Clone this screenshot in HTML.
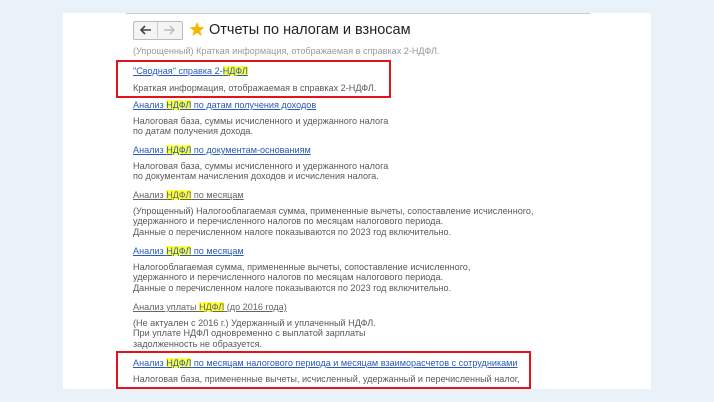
<html><head><style>
body{margin:0;width:714px;height:402px;background:#e9f1f9;position:relative;overflow:hidden;font-family:"Liberation Sans",sans-serif}
.p{position:absolute;left:63px;top:13px;width:588px;height:376px;background:#fff}
.t{position:absolute;font-size:9.1px;color:#5a5a5a;white-space:nowrap;line-height:10.3px;margin-top:1px}
.l{color:#2a5ab8;text-decoration:underline}
.g{color:#666;text-decoration:underline}
.h{background:#ffff40}
.box{position:absolute;border:2px solid #e3131d}
</style></head><body>
<div class="p"></div>
<div style="position:absolute;left:126px;top:13px;width:464px;height:1px;background:#ccc"></div>
<div style="position:absolute;left:133px;top:21px;width:48px;height:17px;border:1px solid #bbb;border-radius:2px;background:#f4f4f4"></div>
<div style="position:absolute;left:157px;top:22px;width:1px;height:16px;background:#ccc"></div>
<svg style="position:absolute;left:139px;top:24px" width="14" height="12"><path d="M12 6H2M6 2L2 6L6 10" stroke="#444" stroke-width="1.6" fill="none"/></svg>
<svg style="position:absolute;left:162px;top:24px" width="14" height="12"><path d="M2 6H12M8 2L12 6L8 10" stroke="#bbb" stroke-width="1.4" fill="none"/></svg>
<svg style="position:absolute;left:189px;top:21px" width="16" height="16"><path d="M8 1L10 6L15.5 6.3L11.2 9.8L12.7 15L8 12L3.3 15L4.8 9.8L0.5 6.3L6 6Z" fill="#f5b800"/></svg>
<div class="t" style="left:209px;top:21px;font-size:14.5px;color:#222;line-height:17px">Отчеты по налогам и взносам</div>
<div class="t" style="left:133px;top:45px;color:#999">(Упрощенный) Краткая информация, отображаемая в справках 2-НДФЛ.</div>
<div class="box" style="left:116px;top:60px;width:271px;height:34px"></div>
<div class="t l" style="left:133px;top:65px">"Сводная" справка 2-<span class="h">НДФЛ</span></div>
<div class="t" style="left:133px;top:82px">Краткая информация, отображаемая в справках 2-НДФЛ.</div>
<div class="t l" style="left:133px;top:99px">Анализ <span class="h">НДФЛ</span> по датам получения доходов</div>
<div class="t" style="left:133px;top:115px">Налоговая база, суммы исчисленного и удержанного налога<br>по датам получения дохода.</div>
<div class="t l" style="left:133px;top:144px">Анализ <span class="h">НДФЛ</span> по документам-основаниям</div>
<div class="t" style="left:133px;top:160px">Налоговая база, суммы исчисленного и удержанного налога<br>по документам начисления доходов и исчисления налога.</div>
<div class="t g" style="left:133px;top:189px">Анализ <span class="h">НДФЛ</span> по месяцам</div>
<div class="t" style="left:133px;top:205px">(Упрощенный) Налогооблагаемая сумма, примененные вычеты, сопоставление исчисленного,<br>удержанного и перечисленного налогов по месяцам налогового периода.<br>Данные о перечисленном налоге показываются по 2023 год включительно.</div>
<div class="t l" style="left:133px;top:245px">Анализ <span class="h">НДФЛ</span> по месяцам</div>
<div class="t" style="left:133px;top:261px">Налогооблагаемая сумма, примененные вычеты, сопоставление исчисленного,<br>удержанного и перечисленного налогов по месяцам налогового периода.<br>Данные о перечисленном налоге показываются по 2023 год включительно.</div>
<div class="t g" style="left:133px;top:301px">Анализ уплаты <span class="h">НДФЛ</span> (до 2016 года)</div>
<div class="t" style="left:133px;top:317px">(Не актуален с 2016 г.) Удержанный и уплаченный НДФЛ.<br>При уплате НДФЛ одновременно с выплатой зарплаты<br>задолженность не образуется.</div>
<div class="box" style="left:116px;top:351px;width:411px;height:34px"></div>
<div class="t l" style="left:133px;top:357px">Анализ <span class="h">НДФЛ</span> по месяцам налогового периода и месяцам взаиморасчетов с сотрудниками</div>
<div class="t" style="left:133px;top:373px">Налоговая база, примененные вычеты, исчисленный, удержанный и перечисленный налог,</div>
</body></html>
